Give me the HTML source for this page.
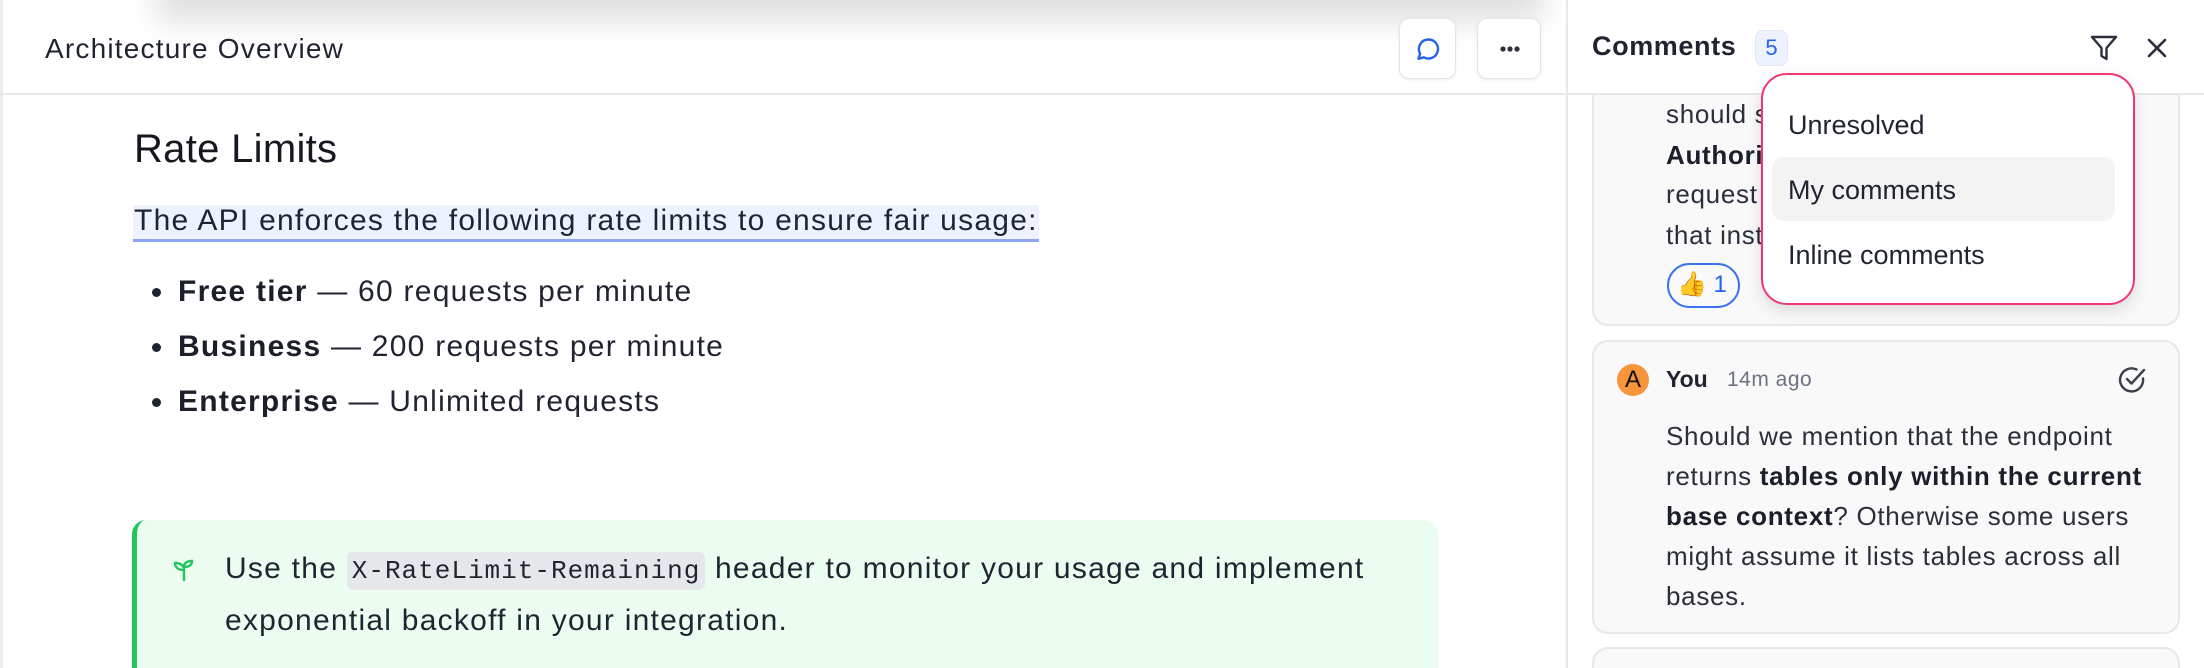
<!DOCTYPE html>
<html><head><meta charset="utf-8"><style>
*{box-sizing:border-box;margin:0;padding:0}
html,body{width:2204px;height:668px;overflow:hidden}
body{background:#fff;font-family:"Liberation Sans",sans-serif;color:#1f2430;position:relative}
.abs{position:absolute}
.topshadow{left:170px;top:-40px;width:1360px;height:40px;box-shadow:0 8px 30px 14px rgba(0,0,0,.12);background:#fff}
.btn{border:1.5px solid #e3e5e9;border-radius:10px;background:#fff;box-shadow:0 1px 3px rgba(0,0,0,.08)}
.card{background:#f9f9fa;border:2px solid #e8e8ea;border-radius:16px}
.ln{position:absolute;left:1666px;font-size:26px;letter-spacing:.7px;white-space:nowrap;line-height:40px;color:#2a2f3a}
.bt{font-size:30px;letter-spacing:1.25px}
b{font-weight:700;color:#1b1f29}
.li{position:relative;padding-left:26px}
.li:before{content:"";position:absolute;left:0;top:24px;width:9px;height:9px;border-radius:50%;background:#1f2430}
</style></head><body>
<div class="abs topshadow"></div>
<div class="abs" style="left:0;top:0;width:3px;height:668px;background:#ececec"></div>
<div class="abs" style="left:0;top:93px;width:2204px;height:2px;background:#e8e8ea"></div>
<div class="abs" style="left:1566px;top:0;width:2px;height:668px;background:#e8e8ea"></div>

<div class="abs" style="left:45px;top:33px;font-size:28px;letter-spacing:1.2px;color:#1f2430">Architecture Overview</div>
<div class="abs btn" style="left:1399px;top:18px;width:57px;height:61px">
<svg width="57" height="61" viewBox="0 0 57 61"><path d="M28.5 20.5a9.5 9.5 0 1 1-4.6 17.8l-5.4 1.5 1.6-5.2a9.5 9.5 0 0 1 8.4-14.1z" fill="none" stroke="#2563eb" stroke-width="2.4" stroke-linejoin="round"/></svg></div>
<div class="abs btn" style="left:1477px;top:18px;width:64px;height:61px">
<svg width="64" height="61"><circle cx="25" cy="30" r="2.6" fill="#2a2f3a"/><circle cx="32" cy="30" r="2.6" fill="#2a2f3a"/><circle cx="39" cy="30" r="2.6" fill="#2a2f3a"/></svg></div>

<div class="abs" style="left:134px;top:127px;font-size:40px;letter-spacing:.3px;color:#15181f">Rate Limits</div>
<div class="abs" style="left:133px;top:205px;width:906px;height:37px;background:#eef2fe;border-bottom:3px solid #8ca5f7"></div>
<div class="abs bt" style="left:134px;top:203px;line-height:35px;white-space:nowrap">The API enforces the following rate limits to ensure fair usage:</div>
<div class="abs bt" style="left:152px;top:264px;line-height:55px;white-space:nowrap">
<div class="li"><b>Free tier</b> — 60 requests per minute</div>
<div class="li"><b>Business</b> — 200 requests per minute</div>
<div class="li"><b>Enterprise</b> — Unlimited requests</div></div>

<div class="abs" style="left:132px;top:520px;width:1306px;height:148px;background:#ebfdf1;border-left:5px solid #22c55e;border-radius:14px 14px 0 0"></div>
<svg class="abs" style="left:170px;top:554px" width="28" height="30" viewBox="0 0 28 30"><path d="M14 26v-10M14 16c0-5-4-7-9-7 0 5 4 7 9 7zM14 13c0-4 3-6 8-6 0 4-3 6-8 6z" fill="none" stroke="#22c55e" stroke-width="2.4" stroke-linecap="round"/></svg>
<div class="abs bt" style="left:225px;top:544px;line-height:49px;white-space:nowrap">Use the <span style="font-family:'Liberation Mono',monospace;font-size:26px;letter-spacing:1px;background:#e6e7ea;border-radius:6px;padding:4px 5px">X-RateLimit-Remaining</span> header to monitor your usage and implement<br>exponential backoff in your integration.</div>

<!-- right panel -->
<div class="card abs" style="left:1592px;top:40px;width:588px;height:286px"></div>
<div class="abs" style="left:1568px;top:0;width:636px;height:93px;background:#fff"></div>
<div class="abs" style="left:1568px;top:93px;width:636px;height:2px;background:#e8e8ea"></div>
<div class="abs" style="left:1592px;top:31px;font-size:27px;letter-spacing:.6px;font-weight:700;color:#1f2430">Comments</div>
<div class="abs" style="left:1755px;top:30px;width:33px;height:36px;background:#eef2fe;border:1.5px solid #dfe5f7;border-radius:8px;color:#2563eb;font-size:22px;text-align:center;line-height:33px">5</div>
<svg class="abs" style="left:2088px;top:32px" width="32" height="32" viewBox="0 0 32 32"><path d="M4 5h24l-9.5 11v11l-5-3v-8z" fill="none" stroke="#2a2f3a" stroke-width="2.4" stroke-linejoin="round"/></svg>
<svg class="abs" style="left:2143px;top:34px" width="28" height="28" viewBox="0 0 28 28"><path d="M6 6l16 16M22 6L6 22" stroke="#2a2f3a" stroke-width="2.6" stroke-linecap="round"/></svg>

<div class="ln" style="top:94px">should s</div>
<div class="ln" style="top:135px"><b>Authori</b></div>
<div class="ln" style="top:174px">request</div>
<div class="ln" style="top:215px">that inst</div>
<div class="abs" style="left:1667px;top:263px;width:73px;height:45px;border:2.5px solid #3b72f0;border-radius:23px;font-size:24px;color:#2563eb;line-height:40px;padding-left:8px;white-space:nowrap"><span style="color:#f59a3c">👍</span> 1</div>

<div class="abs" style="left:1761px;top:73px;width:374px;height:232px;border:2.5px solid #f0386f;border-radius:26px;background:#fff;box-shadow:0 6px 16px rgba(0,0,0,.12)"></div>
<div class="abs" style="left:1772px;top:157px;width:343px;height:64px;background:#f3f3f4;border-radius:12px"></div>
<div class="abs" style="left:1788px;top:108px;font-size:27px;color:#1f2430;white-space:nowrap">
<div style="line-height:35px">Unresolved</div><div style="line-height:30px;margin-top:32px">My comments</div><div style="line-height:35px;margin-top:33px">Inline comments</div></div>

<div class="card abs" style="left:1592px;top:340px;width:588px;height:294px"></div>
<div class="abs" style="left:1617px;top:364px;width:32px;height:32px;border-radius:50%;background:#f7953a;color:#111;font-size:24px;text-align:center;line-height:32px">A</div>
<div class="abs" style="left:1666px;top:366px;font-size:23px;font-weight:700;color:#1f2430">You</div>
<div class="abs" style="left:1727px;top:368px;font-size:21px;letter-spacing:.5px;color:#6b7280">14m ago</div>
<svg class="abs" style="left:2116px;top:364px" width="32" height="32" viewBox="0 0 32 32"><path d="M27 14.5A11.5 11.5 0 1 1 20.5 5.5" fill="none" stroke="#3a3f4a" stroke-width="2.4" stroke-linecap="round"/><path d="M11 15l4.5 4.5L28 6" fill="none" stroke="#3a3f4a" stroke-width="2.4" stroke-linecap="round" stroke-linejoin="round"/></svg>
<div class="ln" style="top:416px">Should we mention that the endpoint</div>
<div class="ln" style="top:456px">returns <b>tables only within the current</b></div>
<div class="ln" style="top:496px"><b>base context</b>? Otherwise some users</div>
<div class="ln" style="top:536px">might assume it lists tables across all</div>
<div class="ln" style="top:576px">bases.</div>
<div class="card abs" style="left:1592px;top:647px;width:588px;height:21px;border-bottom:none;border-radius:16px 16px 0 0"></div>
</body></html>
